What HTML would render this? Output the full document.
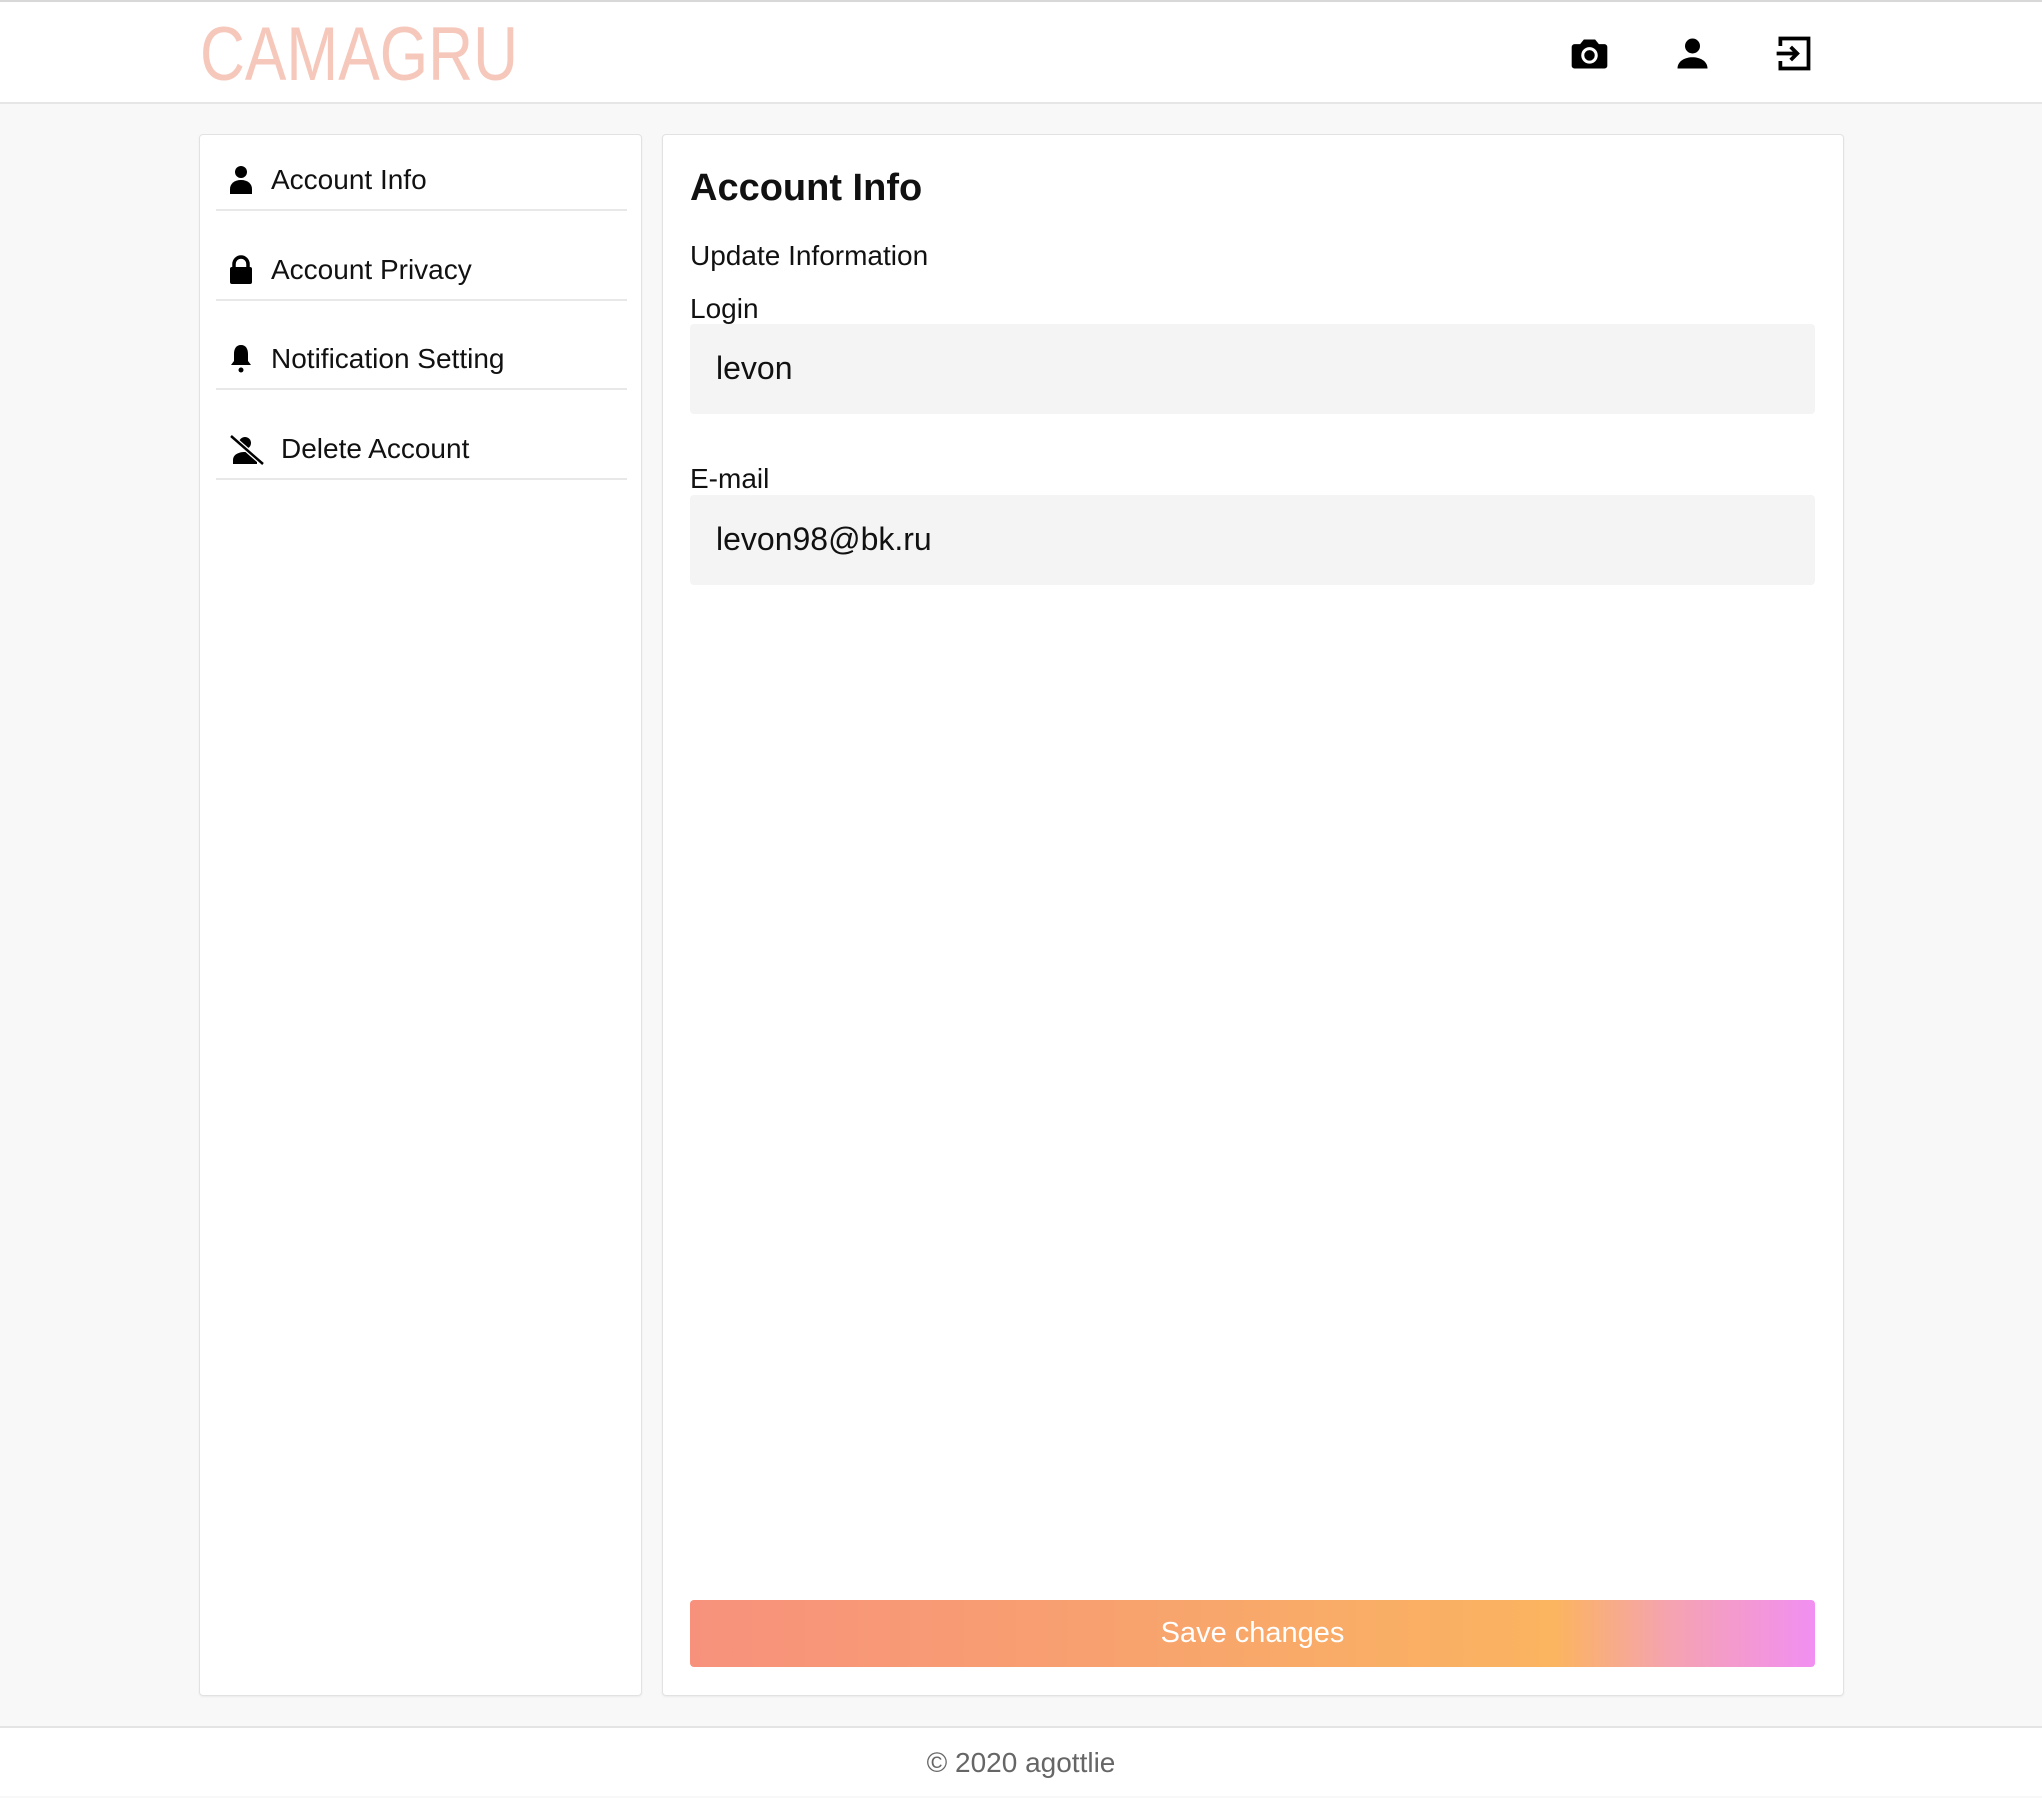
<!DOCTYPE html>
<html><head><meta charset="utf-8">
<style>
*{box-sizing:border-box;margin:0;padding:0}
body{width:2042px;height:1796px;background:#f8f8f8;font-family:"Liberation Sans",Arial,sans-serif;color:#111;position:relative;overflow:hidden}
.hdr{position:absolute;left:0;top:0;width:2042px;height:104px;background:#fff;border-top:2px solid #d8d8d8;border-bottom:2px solid #e6e6e6}
.ico{position:absolute;top:29px;width:45px;height:45px}
.panel{position:absolute;top:134px;height:1562px;background:#fff;border:1px solid #e2e2e2;border-radius:4px;box-shadow:0 1px 2px rgba(0,0,0,.06)}
.item{position:absolute;left:16px;width:411px;height:76px;border-bottom:2px solid #e8e8e8;font-size:28px}
.item span{position:absolute;left:55px;top:29px}
.item svg{position:absolute;left:13px;top:30px}
.lbl{position:absolute;left:27px;font-size:28px}
.inp{position:absolute;left:27px;width:1125px;height:90px;background:#f4f4f4;border-radius:4px;font-size:32px}
.inp span{position:absolute;left:26px;top:26px}
.btn{position:absolute;left:27px;top:1465px;width:1125px;height:67px;border-radius:4px;background:linear-gradient(90deg,#f7917c 0%,#f8a070 35%,#f9ad66 60%,#fbb460 77%,#f5a3b0 87%,#f28ff2 100%);color:#fff;font-size:29px;text-align:center;line-height:67px}
.ftr{position:absolute;left:0;top:1726px;width:2042px;height:70px;background:#fff;border-top:2px solid #e4e4e4;text-align:center;font-size:28px;color:#666;line-height:70px}
</style></head><body>
<div class="hdr">
<svg style="position:absolute;left:198px;top:18px" width="330" height="70"><text x="2" y="60" font-family="Liberation Sans" font-size="76" fill="#f0a48e" textLength="318" lengthAdjust="spacingAndGlyphs" opacity=".6">CAMAGRU</text></svg>
<svg class="ico" style="left:1567px" viewBox="0 0 24 24"><path d="M4 7h3l2-2.5h6L17 7h3a1.5 1.5 0 0 1 1.5 1.5v10A1.5 1.5 0 0 1 20 20H4a1.5 1.5 0 0 1-1.5-1.5v-10A1.5 1.5 0 0 1 4 7z" fill="#000"/><circle cx="12" cy="13" r="3.6" fill="none" stroke="#fff" stroke-width="1.6"/></svg>
<svg class="ico" style="left:1670px" viewBox="0 0 24 24"><circle cx="12" cy="8" r="4" fill="#000"/><path d="M4 20c0-4 4-6 8-6s8 2 8 6z" fill="#000"/></svg>
<svg class="ico" style="left:1771px" viewBox="0 0 24 24" fill="none" stroke="#000" stroke-width="2"><path d="M5 8V4h15v16H5v-4"/><path d="M3 12h11M10.5 8.5 14 12l-3.5 3.5"/></svg>
</div>

<div class="panel" style="left:199px;width:443px">
<div class="item" style="top:0"><svg width="24" height="30" viewBox="0 0 24 30"><circle cx="12" cy="7" r="6" fill="#000"/><path d="M1 29v-5c0-5 4-9 11-9s11 4 11 9v5z" fill="#000"/></svg><span>Account Info</span></div>
<div class="item" style="top:90px"><svg width="24" height="30" viewBox="0 0 24 30"><path d="M5 13V9a7 7 0 0 1 14 0v4" fill="none" stroke="#000" stroke-width="3.5"/><rect x="1" y="12" width="22" height="17" rx="2" fill="#000"/></svg><span>Account Privacy</span></div>
<div class="item" style="top:179px"><svg width="24" height="30" viewBox="0 0 24 30"><path d="M12 1c-5 0-7 4-7 9v7l-3 4h20l-3-4v-7c0-5-2-9-7-9z" fill="#000"/><circle cx="12" cy="26" r="2.5" fill="#000"/></svg><span>Notification Setting</span></div>
<div class="item" style="top:269px"><svg width="36" height="32" viewBox="0 0 36 32"><circle cx="16" cy="9" r="6" fill="#000"/><path d="M4 30v-4c0-5 5-8 12-8s12 3 12 8v4z" fill="#000"/><path d="M2 2l32 28" stroke="#fff" stroke-width="5"/><path d="M2 2l32 28" stroke="#000" stroke-width="2.5"/></svg><span style="left:65px">Delete Account</span></div>
</div>

<div class="panel" style="left:662px;width:1182px">
<div style="position:absolute;left:27px;top:32px;font-size:38px;font-weight:bold">Account Info</div>
<div class="lbl" style="top:105px">Update Information</div>
<div class="lbl" style="top:158px">Login</div>
<div class="inp" style="top:189px"><span>levon</span></div>
<div class="lbl" style="top:328px">E-mail</div>
<div class="inp" style="top:360px"><span>levon98@bk.ru</span></div>
<div class="btn">Save changes</div>
</div>

<div class="ftr">© 2020 agottlie</div>
</body></html>
